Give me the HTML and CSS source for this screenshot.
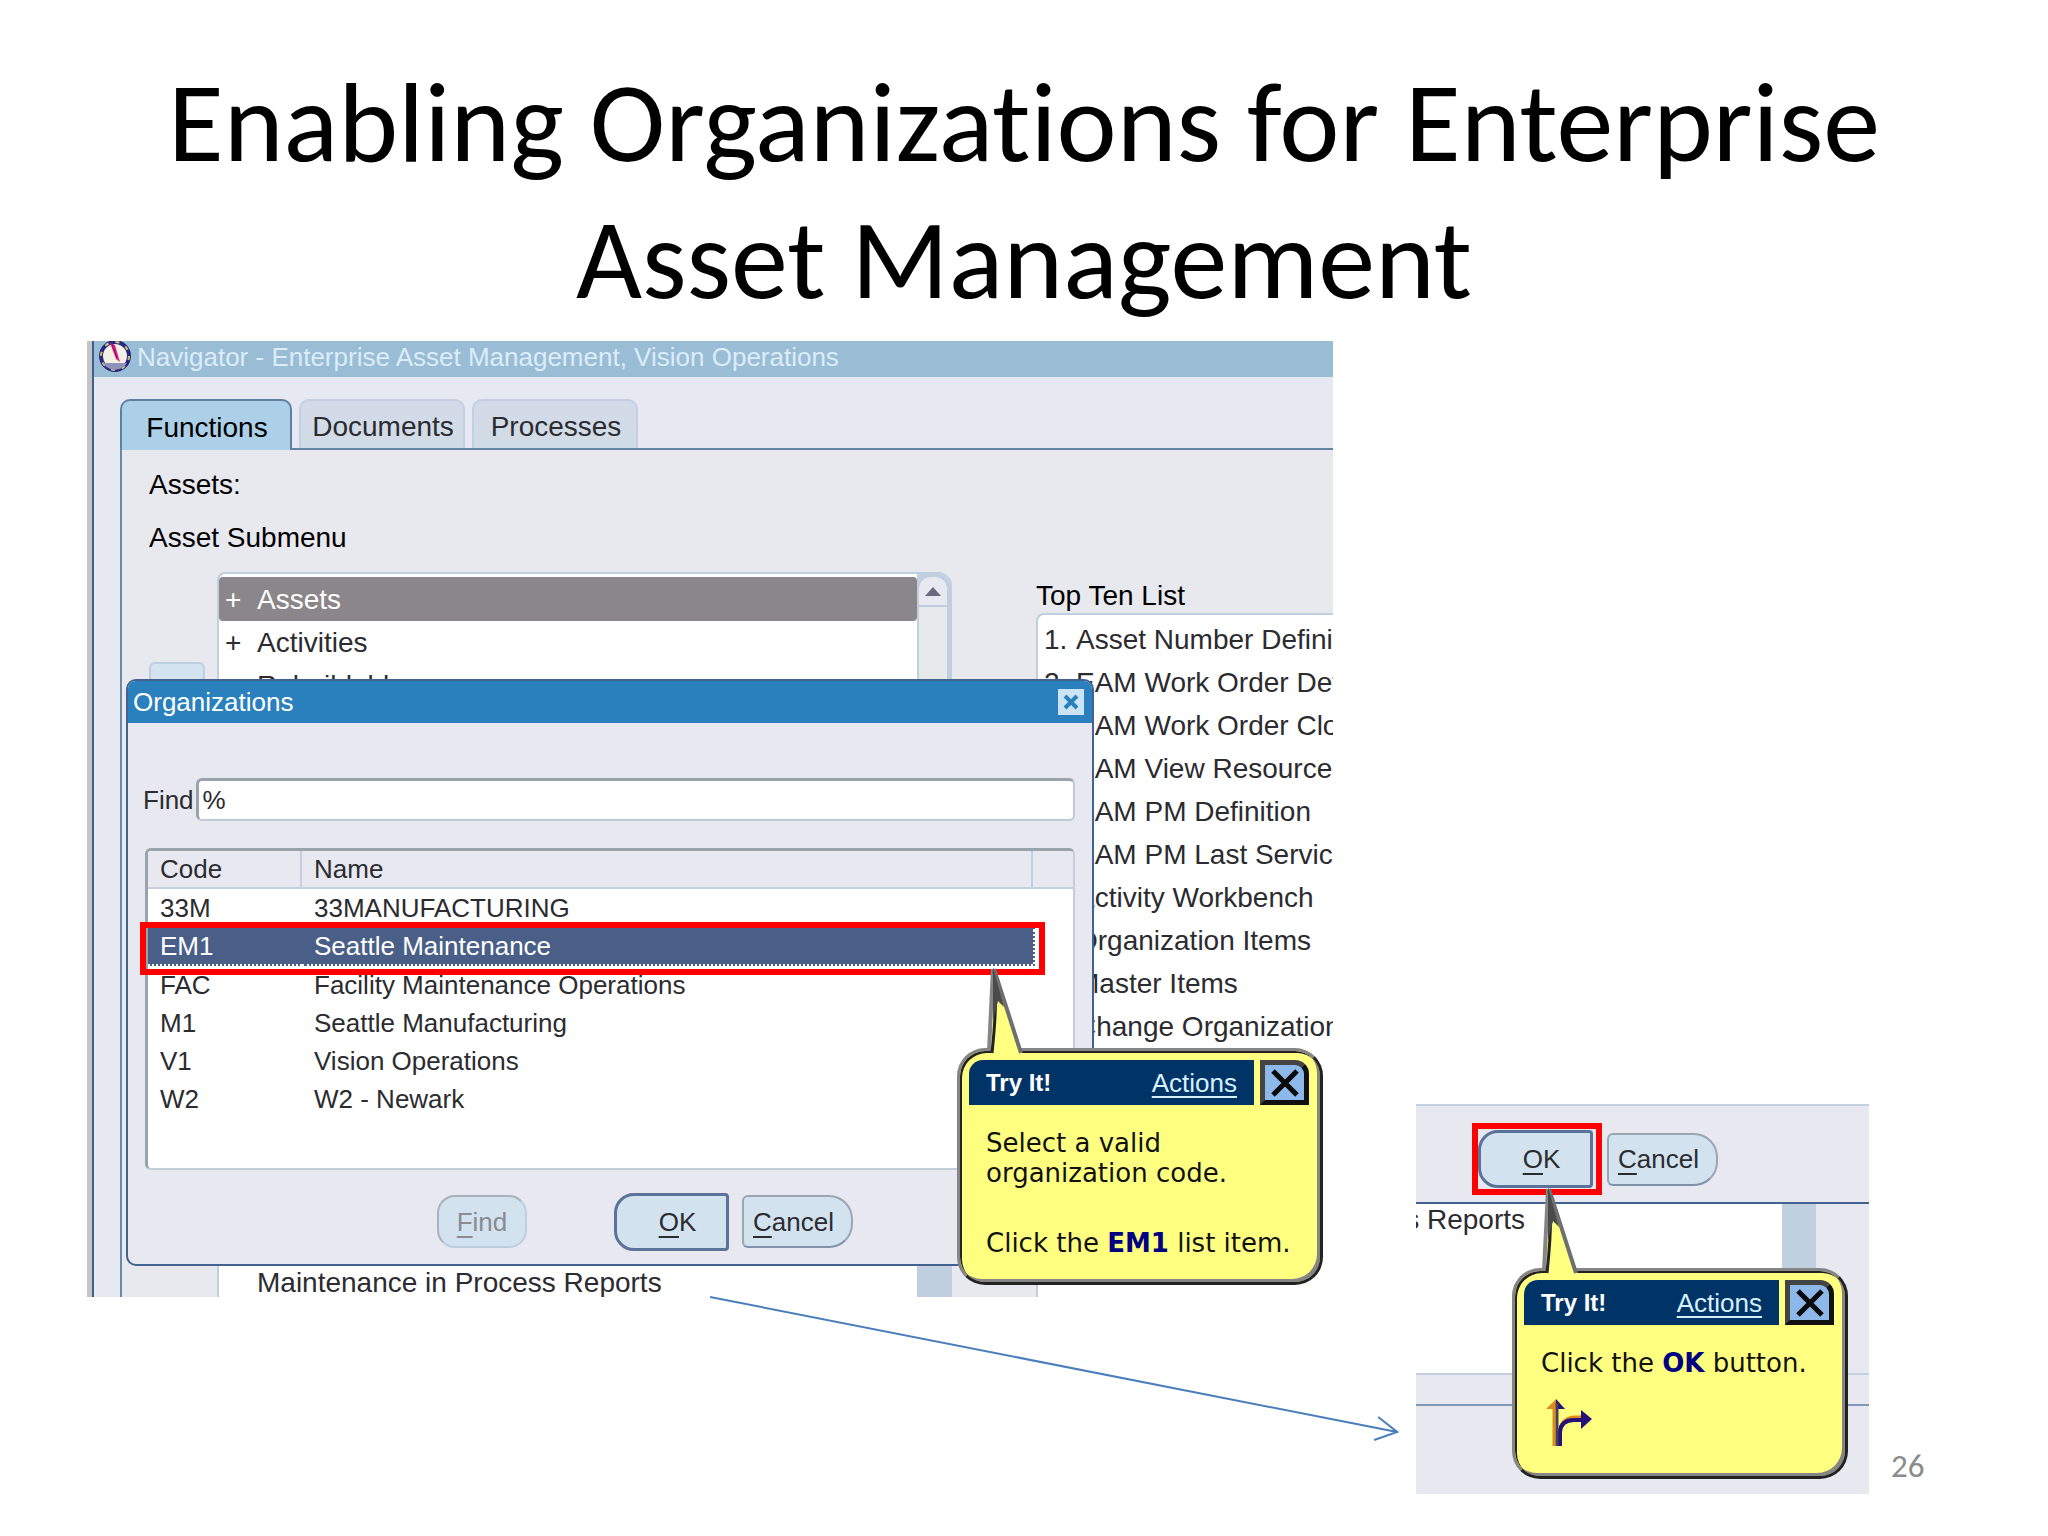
FILE: index.html
```html
<!DOCTYPE html>
<html lang="en">
<head>
<meta charset="utf-8">
<title>Enabling Organizations for Enterprise Asset Management</title>
<link rel="stylesheet" href="styles.css">
</head>
<body>
<main class="slide">
  <h1 class="slide-title">Enabling Organizations for Enterprise<br>Asset Management</h1>

  <div class="stage">
    <section class="shot shot-main">
      <div class="navigator">
        <header class="nav-title">
          <svg class="nav-icon" viewBox="0 0 34 34" aria-hidden="true">
            <circle cx="17" cy="17" r="14" fill="#f4f1e4" stroke="#2b2780" stroke-width="4"/>
            <circle cx="17" cy="17" r="14" fill="none" stroke="#c9c178" stroke-width="2" stroke-dasharray="4 7"/>
            <path d="M5 24a14 14 0 0 0 24 0z" fill="#8d93b8"/>
            <path d="M12 4l5 2 5 17-4-3z" fill="#e0218a"/>
            <path d="M14 5l5 14" stroke="#7a1050" stroke-width="1"/>
          </svg>
          <span>Navigator - Enterprise Asset Management, Vision Operations</span>
        </header>
        <div class="nav-body">
          <div class="tabs" role="tablist">
            <button class="tab tab-on" role="tab" aria-selected="true">Functions</button>
            <button class="tab" role="tab">Documents</button>
            <button class="tab" role="tab">Processes</button>
          </div>
          <div class="panel">
            <div class="panel-left">
              <p class="panel-line">Assets:</p>
              <p class="panel-line">Asset Submenu</p>
              <div class="tree-row">
                <button class="expand" aria-label="Expand"></button>
                <div class="tree">
                  <ul class="tree-list">
                    <li class="tree-item tree-on"><span class="plus">+</span>Assets</li>
                    <li class="tree-item"><span class="plus">+</span>Activities</li>
                    <li class="tree-item"><span class="plus"></span>Rebuildables</li>
                    <li class="tree-item tree-last"><span class="plus"></span>Maintenance in Process Reports</li>
                  </ul>
                  <div class="scroll">
                    <div class="scroll-up"><svg viewBox="0 0 16 9" width="16" height="9" aria-hidden="true"><path d="M8 0l8 9H0z" fill="#6b6880"/></svg></div>
                    <div class="scroll-track"></div>
                    <div class="scroll-end"></div>
                  </div>
                </div>
                <div class="gutter"></div>
              </div>
            </div>
            <div class="panel-right">
              <h2 class="top-title">Top Ten List</h2>
              <ol class="top-list">
                <li><span class="num">1.</span>Asset Number Definition</li>
                <li><span class="num">2.</span>EAM Work Order Definition</li>
                <li><span class="num">3.</span>EAM Work Order Close</li>
                <li><span class="num">4.</span>EAM View Resource</li>
                <li><span class="num">5.</span>EAM PM Definition</li>
                <li><span class="num">6.</span>EAM PM Last Service</li>
                <li><span class="num">7.</span>Activity Workbench</li>
                <li><span class="num">8.</span>Organization Items</li>
                <li><span class="num">9.</span>Master Items</li>
                <li><span class="num">0.</span>Change Organization</li>
              </ol>
            </div>
          </div>
        </div>
      </div>

      <section class="dialog">
        <header class="dialog-title">
          <span>Organizations</span>
          <button class="dialog-close" aria-label="Close"><svg viewBox="0 0 26 26" width="26" height="26" aria-hidden="true"><path d="M7 7l12 12M19 7L7 19" stroke="#2a80bd" stroke-width="4"/></svg></button>
        </header>
        <div class="dialog-body">
          <div class="find-row">
            <label for="find">Find</label>
            <input class="find-box" id="find" type="text" value="%">
          </div>
          <div class="lov">
            <table class="lov-table">
              <colgroup><col class="col-code"><col><col class="col-end"></colgroup>
              <thead><tr><th>Code</th><th>Name</th><th></th></tr></thead>
              <tbody>
                <tr><td>33M</td><td>33MANUFACTURING</td><td></td></tr>
                <tr class="row-on"><td>EM1</td><td>Seattle Maintenance</td><td></td></tr>
                <tr><td>FAC</td><td>Facility Maintenance Operations</td><td></td></tr>
                <tr><td>M1</td><td>Seattle Manufacturing</td><td></td></tr>
                <tr><td>V1</td><td>Vision Operations</td><td></td></tr>
                <tr><td>W2</td><td>W2 - Newark</td><td></td></tr>
              </tbody>
            </table>
          </div>
          <div class="dialog-buttons">
            <button class="btn btn-find" disabled><u>F</u>ind</button>
            <button class="btn btn-ok"><u>O</u>K</button>
            <button class="btn btn-cancel"><u>C</u>ancel</button>
          </div>
        </div>
      </section>

      <div class="mark mark-row"></div>

      <aside class="callout callout-code">
        <svg class="tail" viewBox="0 0 40 92" width="40" height="92" aria-hidden="true">
          <path d="M8 2L5 86v6h31v-6z" fill="#ffff80"/>
          <path d="M7 2L3 84" stroke="#858585" stroke-width="4" fill="none"/>
          <path d="M8 4Q12 30 6 86" stroke="#222" stroke-width="3" fill="none"/>
          <path d="M8 2L35 86" stroke="#6f6f6f" stroke-width="4" fill="none"/>
          <path d="M7 0l11 40-6-6-5 20z" fill="#4a4a4a"/>
        </svg>
        <header class="callout-head">
          <div class="callout-bar"><strong>Try It!</strong><a href="#actions">Actions</a></div>
          <button class="callout-close" aria-label="Close"><svg viewBox="0 0 32 32" width="32" height="32" aria-hidden="true"><path d="M4 4l24 24M28 4L4 28" stroke="#0a0a0a" stroke-width="5"/></svg></button>
        </header>
        <div class="callout-text">
          <p>Select a valid<br>organization code.</p>
          <p>Click the <b>EM1</b> list item.</p>
        </div>
      </aside>
    </section>

    <section class="shot shot-ok">
      <div class="ok-top">
        <button class="btn btn-ok"><u>O</u>K</button>
        <button class="btn btn-cancel"><u>C</u>ancel</button>
      </div>
      <div class="ok-list">
        <div class="ok-white"><span class="ok-item">s Reports</span></div>
        <div class="ok-scroll"></div>
      </div>
      <div class="ok-strip"></div>
      <div class="mark mark-ok"></div>
      <aside class="callout callout-ok">
        <svg class="tail" viewBox="0 0 40 92" width="40" height="92" aria-hidden="true">
          <path d="M8 2L5 86v6h31v-6z" fill="#ffff80"/>
          <path d="M7 2L3 84" stroke="#858585" stroke-width="4" fill="none"/>
          <path d="M8 4Q12 30 6 86" stroke="#222" stroke-width="3" fill="none"/>
          <path d="M8 2L35 86" stroke="#6f6f6f" stroke-width="4" fill="none"/>
          <path d="M7 0l11 40-6-6-5 20z" fill="#4a4a4a"/>
        </svg>
        <header class="callout-head">
          <div class="callout-bar"><strong>Try It!</strong><a href="#actions">Actions</a></div>
          <button class="callout-close" aria-label="Close"><svg viewBox="0 0 32 32" width="32" height="32" aria-hidden="true"><path d="M4 4l24 24M28 4L4 28" stroke="#0a0a0a" stroke-width="5"/></svg></button>
        </header>
        <div class="callout-text">
          <p>Click the <b>OK</b> button.</p>
          <svg class="fork" viewBox="0 0 46 48" width="46" height="48" aria-hidden="true">
            <path d="M8 47V9" stroke="#e08a1e" stroke-width="3" fill="none"/>
            <path d="M0 10L10 0v10z" fill="#e08a1e"/>
            <path d="M10 0l9 10h-9z" fill="#26107a"/>
            <path d="M13 34Q15 19 28 18h8" stroke="#e08a1e" stroke-width="3" fill="none"/>
            <path d="M14 47V33Q15 21 28 21h8" stroke="#26107a" stroke-width="4" fill="none"/>
            <path d="M11 47V4" stroke="#45405a" stroke-width="3" fill="none"/>
            <path d="M35 11l11 9-11 10z" fill="#26107a"/>
          </svg>
        </div>
      </aside>
    </section>

    <p class="page-no">26</p>

    <svg class="arrow" viewBox="0 0 692 146" aria-hidden="true">
      <path d="M1 1L688 136M669 121l19 15-23 8" fill="none" stroke="#4a7ebb" stroke-width="2"/>
    </svg>
  </div>
</main>
</body>
</html>
```
FILE: styles.css
```css
* { box-sizing: border-box; }

body {
  margin: 0;
  background: #fff;
  color: #2b2b30;
  font: 28px/32px "Liberation Sans", Arial, sans-serif;
}

p, h1, h2, ul, ol { margin: 0; padding: 0; }
ul, ol { list-style: none; }
button, input { font: inherit; color: inherit; padding: 0; }

.slide { padding-top: 54px; min-height: 100vh; overflow: hidden; }

.slide-title {
  color: #000;
  font: 400 114px/137px Carlito, Calibri, Lato, sans-serif;
  font-variant-ligatures: none;
  text-align: center;
  white-space: nowrap;
}

.stage {
  position: relative;
  display: grid;
  grid-template-columns:
    minmax(0, 87fr) minmax(0, 1246fr) minmax(0, 83fr)
    minmax(0, 453fr) minmax(0, 22fr) minmax(0, 157fr);
  margin-top: 13px;
}

.shot { position: relative; }

/* Navigator window */
.shot-main { grid-column: 2; }

.navigator {
  display: flex;
  flex-direction: column;
  height: 956px;
  overflow: hidden;
  border-left: 5px solid #c3c6c4;
  background: #e6e9f1;
}

.nav-title {
  display: flex;
  align-items: center;
  gap: 5px;
  height: 36px;
  padding: 0 0 4px 4px;
  border-left: 2px solid #3f5f8f;
  background: #9abdd6;
  color: #dcecf8;
  font-size: 26px;
  white-space: nowrap;
}

.nav-icon { width: 34px; height: 34px; margin-top: -2px; }

.nav-body {
  flex: 1;
  display: flex;
  flex-direction: column;
  padding: 22px 0 0 26px;
  border-left: 2px solid #3f5f8f;
  min-height: 0;
}

.tabs { display: flex; gap: 7px; height: 51px; border-bottom: 2px solid #6383a3; }

.tab {
  width: 166px;
  height: 49px;
  padding: 5px 0 0 2px;
  border: 2px solid #c4d0e0;
  border-bottom: 0;
  border-radius: 10px 10px 0 0;
  background: linear-gradient(#d4dae9, #d0dce6);
}

.tab-on {
  width: 172px;
  height: 51px;
  padding-top: 4px;
  border-color: #5f80a3;
  background: #acd0e7;
  color: #000;
}

.panel {
  flex: 1;
  display: flex;
  min-height: 0;
  border-left: 2px solid #6d87ab;
  background: #e8e8ef;
  color: #000;
}

.panel-left {
  display: flex;
  flex-direction: column;
  gap: 21px;
  flex: none;
  width: 914px;
  padding: 19px 0 0 27px;
}

.tree-row { display: flex; margin-top: -3px; }
.expand {
  width: 56px;
  height: 60px;
  margin: 90px 12px 0 0;
  border: 2px solid #bdd0e2;
  border-radius: 6px;
  background: #d3e3f0;
}

.tree {
  display: flex;
  flex: 1;
  height: 734px;
  border: 2px solid #bfcfe0;
  border-radius: 8px 14px 0 0;
  background: #fff;
  color: #2b2b30;
}
.gutter { width: 84px; }

.tree-list { flex: 1; display: flex; flex-direction: column; padding-top: 3px; }
.tree-item { height: 43px; padding-left: 6px; line-height: 43px; white-space: nowrap; }
.tree-on { height: 44px; border-radius: 4px; background: #8a8689; color: #fff; line-height: 45px; }
.tree-last { margin-top: auto; }
.plus { display: inline-block; width: 32px; }

.scroll {
  display: flex;
  flex-direction: column;
  width: 33px;
  border-left: 2px solid #bfcfe0;
  border-right: 3px solid #bfcfe0;
  border-radius: 0 12px 0 0;
  background: #bfcfe0;
}
.scroll-up { display: grid; place-items: center; height: 30px; margin-top: 3px; border-radius: 12px 12px 0 0; border-bottom: 2px solid #bfcfe0; background: #e8e8f0; }
.scroll-track { flex: 1; background: #e5e9ec; }
.scroll-end { height: 330px; background: #bfcfe0; }

.panel-right { flex: 1; min-width: 0; padding-top: 130px; }
.top-title { height: 33px; font-size: 28px; font-weight: 400; }
.top-list {
  display: grid;
  grid-auto-rows: 43px;
  height: 700px;
  padding: 3px 0 0 6px;
  border: 2px solid #bfcfe0;
  border-right: 0;
  border-radius: 8px 0 0 0;
  background: #fff;
  color: #2b2b30;
  line-height: 43px;
  white-space: nowrap;
  overflow: hidden;
}
.num { display: inline-block; width: 32px; }

/* List-of-values dialog */
.dialog {
  position: absolute;
  left: 39px;
  top: 338px;
  width: 968px;
  border: 2px solid #43628f;
  border-radius: 10px;
  background: #e8e9f0;
  font-size: 26px;
  overflow: hidden;
}

.dialog-title {
  display: flex;
  align-items: center;
  justify-content: space-between;
  height: 42px;
  padding: 0 8px 0 5px;
  background: #2a80bd;
  color: #fff;
}

.dialog-close { width: 26px; height: 26px; border: 0; background: #cbe4f5; }
.dialog-close svg, .callout-close svg { display: block; }

.dialog-body { padding: 55px 17px 13px 15px; }

.find-row { display: flex; align-items: center; gap: 2px; }
.find-box {
  flex: 1;
  height: 43px;
  padding: 0 4px;
  border: 2px solid #bccbd8;
  border-top: 3px solid #98a3ac;
  border-left: 3px solid #98a3ac;
  border-radius: 6px;
  background: #fff;
}

.lov {
  height: 322px;
  margin-top: 27px;
  margin-left: 2px;
  border: 2px solid #c3ced8;
  border-top: 3px solid #98a3ac;
  border-left: 3px solid #98a3ac;
  border-radius: 6px;
  background: #fff;
  overflow: hidden;
}

.lov-table { width: 100%; border-collapse: separate; border-spacing: 0; table-layout: fixed; line-height: 32px; }
.col-code { width: 154px; }
.col-end { width: 40px; }
.lov-table th { height: 38px; padding: 0 0 0 12px; border-right: 2px solid #c3d0df; border-bottom: 2px solid #c3d0df; background: #e8e9f0; font-weight: 400; text-align: left; }
.lov-table th:last-child { border-right: 0; }
.lov-table td { height: 38px; padding: 0 0 0 12px; white-space: nowrap; }
.lov-table tr.row-on td { height: 39px; background: #4a5f88; border-bottom: 2px dotted #fff; color: #fff; }
.lov-table tr.row-on td:last-child { border-bottom: 0; border-left: 2px dotted #4a5f88; background: #fff; }

.dialog-buttons { display: flex; align-items: center; height: 59px; margin-top: 22px; padding-left: 294px; }

.btn {
  height: 53px;
  border: 2px solid #9aa6b0;
  border-bottom-color: #7f93ab;
  background: #d2e2ef;
  font-size: 26px;
}
.btn u { text-underline-offset: 5px; text-decoration-thickness: 2px; }
.btn-find { width: 90px; border-color: #a9b3bb #bccfe0 #bccfe0 #a9b3bb; border-radius: 18px; color: #8a8a90; }
.btn-ok { width: 115px; height: 58px; padding-left: 12px; border: 3px solid #5b7299; border-radius: 20px 4px 4px 20px; }
.btn-cancel { width: 111px; padding-right: 8px; border-radius: 6px 24px 24px 6px; }
.dialog-buttons .btn-ok { margin: 0 13px 0 87px; }

/* Red highlight frames */
.mark { position: absolute; border: 6px solid #f00; pointer-events: none; }
.mark-row { left: 53px; top: 581px; width: 905px; height: 53px; }
.mark-ok { left: 56px; top: 17px; width: 130px; height: 72px; }

/* Tutorial callouts */
.callout {
  position: absolute;
  padding: 9px 11px 9px 9px;
  border: 3px solid #858585;
  border-right-color: #222;
  border-bottom-color: #222;
  border-radius: 28px;
  background: #ffff80;
  box-shadow: inset 2px 2px 0 #222, inset -3px -3px 0 #858585;
  color: #111;
}
.callout-code { left: 870px; top: 707px; width: 366px; height: 237px; }
.callout-ok { left: 96px; top: 162px; width: 336px; height: 211px; }

.tail { position: absolute; left: 26px; top: -84px; }

.callout-head { display: flex; gap: 6px; height: 45px; }
.callout-bar {
  flex: 1;
  display: flex;
  align-items: center;
  justify-content: space-between;
  padding: 0 17px;
  border-radius: 14px 0 0 0;
  background: #003366;
  color: #fff;
}
.callout-bar strong { font-size: 24px; }
.callout-bar a { color: #d6f0ff; font-size: 26px; text-decoration-thickness: 2px; text-underline-offset: 4px; }
.callout-close { display: grid; place-items: center; width: 49px; border: 5px solid #111; border-top-color: #444; border-left-color: #444; border-radius: 0 14px 0 0; background: #8db9ea; }

.callout-text {
  display: grid;
  gap: 10px;
  padding: 23px 0 0 17px;
  font: 26px/30px "DejaVu Sans", Verdana, sans-serif;
  white-space: nowrap;
}
.callout-text p + p { margin-top: 30px; }
.callout-text b { color: #000080; }
.callout-text .fork { margin: 11px 0 0 5px; }

/* Second capture */
.shot-ok { grid-column: 4; align-self: end; height: 390px; margin-top: 763px; border-top: 2px solid #c3d0df; background: #e7e8f0; }
.ok-top { display: flex; align-items: center; gap: 14px; height: 98px; padding: 10px 0 0 62px; border-bottom: 2px solid #43628f; }
.ok-list { display: flex; height: 169px; padding-right: 53px; }
.ok-white { flex: 1; background: #fff; overflow: hidden; }
.ok-item { display: flex; justify-content: flex-end; width: 109px; white-space: nowrap; }
.ok-scroll { width: 34px; background: #bfd0e0; }
.ok-strip { height: 33px; border-top: 2px solid #c3d0df; border-bottom: 2px solid #7f98b8; }

.page-no { grid-column: 6; align-self: end; margin-bottom: 10px; color: #8b8b8b; font: 33px/36px Carlito, Calibri, Lato, sans-serif; }

.arrow { position: absolute; left: 34.6%; top: 955px; width: 33.8%; }
```
